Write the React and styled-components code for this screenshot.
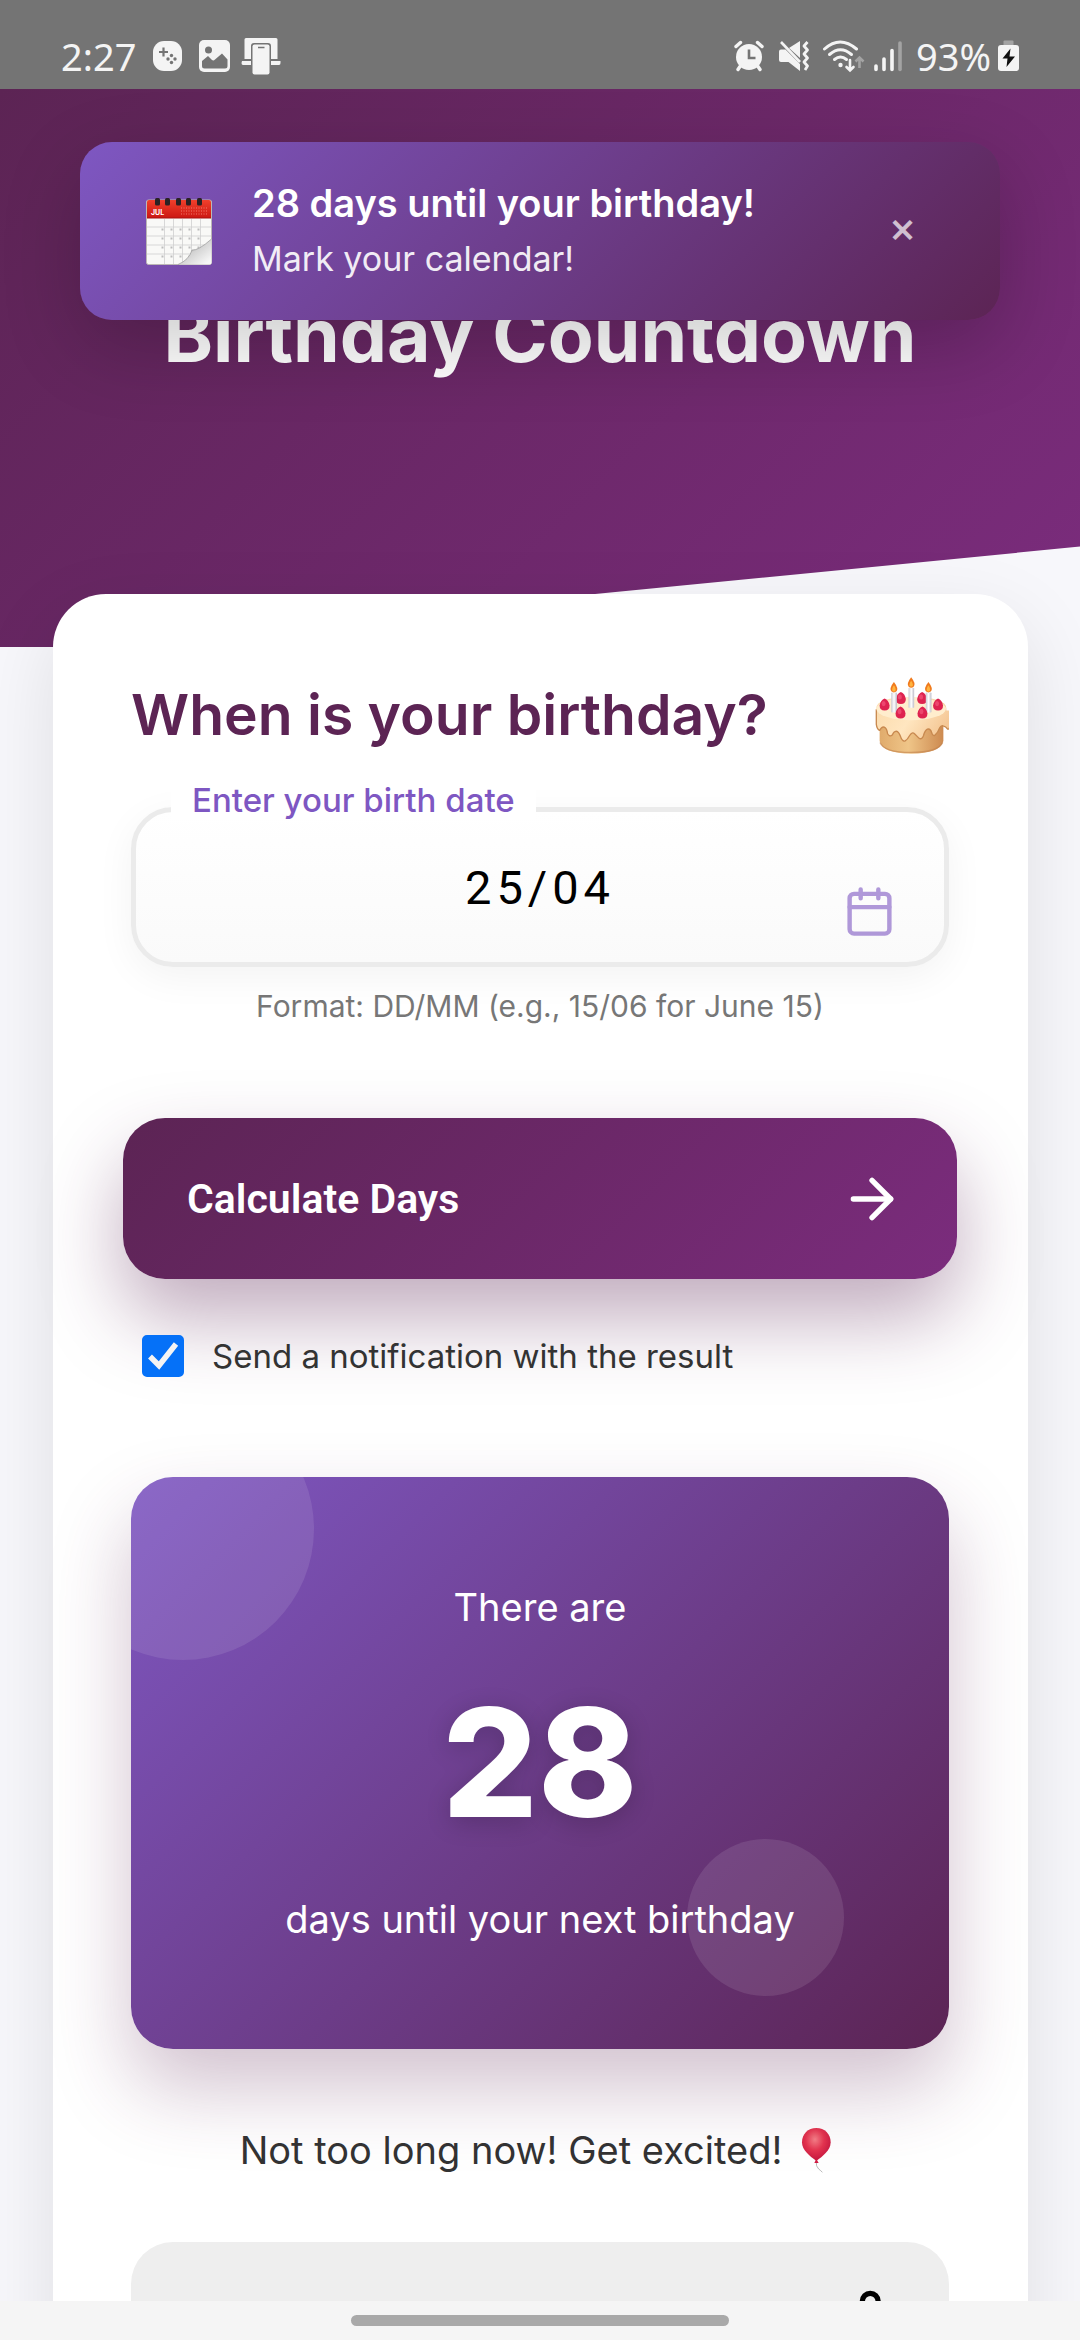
import React, { useState } from "react";
import styled, { createGlobalStyle } from "styled-components";
import { ArrowRight, Share2 } from "lucide-react";

const color = {
  plum: "#5c2454",
  magenta: "#7b2c7d",
  violet: "#7e57c2",
  page: "#f7f7fb",
  text: "#333333",
  muted: "#777777",
};

const GlobalStyle = createGlobalStyle`
  *, *::before, *::after { box-sizing: border-box; }
  body {
    margin: 0;
    background: ${color.page};
    font-family: Inter, "Liberation Sans", sans-serif;
    color: ${color.text};
  }
  h1, h2, p { margin: 0; }
`;

const Screen = styled.div`
  display: flex;
  flex-direction: column;
  height: 100vh;
  overflow: hidden;
`;

const StatusBar = styled.header`
  display: flex;
  flex: none;
  align-items: center;
  justify-content: space-between;
  height: 89px;
  padding: 22px 61px 0;
  background: #747474;
  color: #f4f4f4;
  font-family: "Noto Sans", sans-serif;
  font-size: 38px;
  line-height: 50px;
`;

const StatusGroup = styled.div`
  display: flex;
  align-items: center;
  gap: ${(p) => p.$gap}px;
  svg { display: block; flex: none; }
`;

const Viewport = styled.div`
  position: relative;
  flex: 1;
  min-height: 0;
  overflow: hidden;
  background: ${color.page};
`;

const NavBar = styled.footer`
  display: flex;
  flex: none;
  align-items: center;
  justify-content: center;
  height: 39px;
  background: #f5f5f5;
`;

const NavHandle = styled.div`
  width: 35%;
  height: 11px;
  border-radius: 6px;
  background: #a9a9a9;
`;

const Toast = styled.section`
  position: absolute;
  z-index: 2;
  top: 53px;
  left: 0;
  right: 0;
  display: flex;
  align-items: center;
  gap: 40px;
  width: calc(100% - 160px);
  max-width: 920px;
  margin: 0 auto;
  padding: 33px 66px;
  border-radius: 32px;
  background: linear-gradient(135deg, ${color.violet}, ${color.plum});
  box-shadow: 0 26px 79px rgba(0, 0, 0, 0.2);
  color: #fff;
`;

const ToastBody = styled.div`
  flex: 1;
  line-height: 56px;
`;

const ToastTitle = styled.p`
  font-size: 38px;
  font-weight: 600;
`;

const ToastText = styled.p`
  font-size: 34px;
  opacity: 0.9;
`;

const CloseButton = styled.button`
  width: 63px;
  padding: 0 0 8px;
  border: 0;
  background: none;
  color: #fff;
  font: 500 42px/56px Inter, sans-serif;
  opacity: 0.7;
`;

const Hero = styled.div`
  padding: 196px 53px 262px;
  background: linear-gradient(135deg, ${color.plum}, ${color.magenta});
  clip-path: polygon(0 0, 100% 0, 100% 82%, 5% 100%, 0 100%);
`;

const HeroTitle = styled.h1`
  color: #fff;
  font-size: 75px;
  font-weight: 700;
  line-height: 100px;
  text-align: center;
`;

const Card = styled.main`
  position: relative;
  display: flex;
  flex-direction: column;
  margin: -53px 52px 53px 53px;
  padding: 79px 79px 79px 78px;
  border-radius: 53px;
  background: #fff;
  box-shadow: 0 26px 79px rgba(0, 0, 0, 0.1);
`;

const CardHeader = styled.div`
  display: flex;
  align-items: center;
  justify-content: space-between;
  height: 84px;
  svg { display: block; flex: none; }
`;

const CardTitle = styled.h2`
  color: ${color.plum};
  font-size: 57px;
  font-weight: 600;
  line-height: 84px;
`;

const Field = styled.div`
  position: relative;
  margin-top: 50px;
`;

const FieldLabel = styled.label`
  position: absolute;
  top: -27px;
  left: 40px;
  padding: 0 21px;
  background: #fff;
  color: ${color.violet};
  font-size: 33px;
  font-weight: 500;
  line-height: 40px;
`;

const DateInput = styled.input`
  display: block;
  width: 100%;
  height: 160px;
  padding: 0 58px;
  border: 5px solid #ebebeb;
  border-radius: 42px;
  background: linear-gradient(#fff, #fafafa);
  box-shadow: 0 10px 39px rgba(0, 0, 0, 0.05);
  color: #000;
  font-family: Roboto, sans-serif;
  font-size: 47px;
  letter-spacing: 5px;
  text-align: center;
  outline: 0;
`;

const FieldIcon = styled.span`
  position: absolute;
  top: 78px;
  right: 53px;
  color: ${color.violet};
  opacity: 0.6;
  svg { display: block; }
`;

const Hint = styled.p`
  margin-top: 19px;
  color: ${color.muted};
  font-size: 30px;
  line-height: 40px;
  text-align: center;
`;

const PrimaryButton = styled.button`
  display: flex;
  align-items: center;
  justify-content: space-between;
  height: 161px;
  margin: 92px -8px 0;
  padding: 0 53px 0 64px;
  border: 0;
  border-radius: 42px;
  background: linear-gradient(135deg, ${color.plum}, ${color.magenta});
  box-shadow: 0 39px 79px rgba(92, 36, 84, 0.38);
  color: #fff;
  font-family: Roboto, sans-serif;
  font-size: 41px;
  font-weight: 600;
`;

const CheckRow = styled.label`
  position: relative;
  display: flex;
  align-items: center;
  gap: 28px;
  margin-top: 56px;
  padding-left: 11px;
  font-size: 33px;
  line-height: 42px;
`;

const CheckboxFrame = styled.span`
  display: grid;
  > * { grid-area: 1 / 1; }
  svg { pointer-events: none; }
`;

const Checkbox = styled.input`
  width: 42px;
  height: 42px;
  margin: 0;
  appearance: none;
  border: 3px solid #767676;
  border-radius: 5px;
  background: #fff;
  &:checked {
    border-color: #0571f8;
    background: #0571f8;
  }
`;

const Result = styled.section`
  position: relative;
  display: flex;
  flex-direction: column;
  align-items: center;
  gap: 49px;
  margin-top: 100px;
  padding: 100px 42px;
  overflow: hidden;
  border-radius: 42px;
  background: linear-gradient(135deg, ${color.violet}, ${color.plum});
  box-shadow: 0 39px 79px rgba(92, 36, 84, 0.28);
  color: #fff;
`;

const Bubble = styled.span`
  position: absolute;
  width: ${(p) => p.$size}px;
  height: ${(p) => p.$size}px;
  border-radius: 50%;
  background: rgba(255, 255, 255, 0.1);
`;

const TopBubble = styled(Bubble)`
  top: -79px;
  left: -79px;
`;

const BottomBubble = styled(Bubble)`
  right: 105px;
  bottom: 53px;
`;

const ResultText = styled.p`
  position: relative;
  font-size: 38px;
  line-height: 60px;
`;

const ResultNumber = styled.p`
  position: relative;
  font-size: 150px;
  font-weight: 800;
  line-height: 154px;
  text-shadow: 0 5px 26px rgba(0, 0, 0, 0.2);
`;

const Message = styled.p`
  display: flex;
  align-items: center;
  justify-content: center;
  gap: 11px;
  margin-top: 71px;
  font-size: 38px;
  line-height: 60px;
`;

const ShareButton = styled.button`
  display: flex;
  justify-content: flex-end;
  margin-top: 62px;
  padding: 46px 63px;
  border: 0;
  border-radius: 42px;
  background: #eeeeee;
  color: #000;
`;

function GameIcon() {
  return (
    <svg width="40" height="38" viewBox="0 0 40 38" aria-hidden="true">
      <rect x="6" y="4" width="29" height="30" rx="11" fill="#f4f4f4" />
      <path d="M16.500 10.500v9M12 15h9" stroke="#747474" strokeWidth="2.200" />
      <g fill="#747474">
        <circle cx="24.500" cy="18.500" r="1.700" />
        <circle cx="24.500" cy="25.500" r="1.700" />
        <circle cx="21" cy="22" r="1.700" />
        <circle cx="28" cy="22" r="1.700" />
      </g>
    </svg>
  );
}

function GalleryIcon() {
  return (
    <svg width="40" height="38" viewBox="0 0 40 38" aria-hidden="true">
      <rect x="5" y="3" width="31" height="32" rx="5" fill="#f4f4f4" />
      <circle cx="14.500" cy="13" r="3.500" fill="#747474" />
      <path d="M8 29v-5l6-5 4 4q1.500 1 3-.500l7-6 5.500 6v6.500q0 2.500-2.500 2.500H10.500Q8 31.500 8 29z" fill="#747474" />
    </svg>
  );
}

function DevicesIcon() {
  return (
    <svg width="40" height="38" viewBox="0 0 40 38" aria-hidden="true">
      <path d="M3.500 2.500Q3.500 1 5 1h30q1.500 0 1.500 1.500V22H30V9q0-3-3-3H13q-3 0-3 3v13H3.500z" fill="#f4f4f4" />
      <path d="M1 24h9v4H2q-1.500 0-1.500-2zM30 24h9.500v2q0 2-1.500 2h-8z" fill="#f4f4f4" />
      <rect x="11.500" y="7.500" width="17" height="30" rx="2" fill="#f4f4f4" />
      <path d="M17 10.500h6.500" stroke="#747474" strokeWidth="1.500" />
    </svg>
  );
}

function AlarmIcon() {
  return (
    <svg width="36" height="34" viewBox="0 0 36 34" aria-hidden="true">
      <g stroke="#f4f4f4" strokeWidth="3.400" strokeLinecap="round">
        <path d="M5 7.500 9.500 3.500M31 7.500l-4.500-4M9 27.500 7 30.500M27 27.500l2 3" />
      </g>
      <circle cx="18" cy="18" r="13" fill="#f4f4f4" />
      <path d="M18 10.500V19h6.500" fill="none" stroke="#747474" strokeWidth="2.600" />
    </svg>
  );
}

function MuteIcon() {
  return (
    <svg width="36" height="34" viewBox="0 0 36 34" aria-hidden="true">
      <g fill="#f4f4f4">
        <path d="M13 9 24 2v17z" />
        <path d="M3 12.500q0-2 2-2h4.500L24 25v7L12.500 23H5q-2 0-2-2z" />
      </g>
      <path d="m5 3 19 20" stroke="#f4f4f4" strokeWidth="2.600" />
      <path d="m31.500 3-3.500 4 3.500 4-3.500 4 3.500 4-3.500 4 3.500 4-2.500 4" fill="none" stroke="#f4f4f4" strokeWidth="2.800" strokeLinejoin="round" />
    </svg>
  );
}

function WifiIcon() {
  return (
    <svg width="44" height="34" viewBox="0 0 44 34" aria-hidden="true">
      <g fill="none" stroke="#f4f4f4" strokeWidth="3" strokeLinecap="round">
        <path d="M3.500 10q15.500-14 32 0" />
        <path d="M8.500 15.500q11-9.500 22 0" />
        <path d="M13.500 20.500q6-5 12 0" />
        <path d="M29 21v10M25.500 28l3.500 3.500 3.500-3.500" strokeWidth="2.600" />
      </g>
      <circle cx="19.500" cy="26" r="2.200" fill="#f4f4f4" />
      <path d="M38.500 29V19M34.500 22.500l4-4 4 4" fill="none" stroke="#a3a3a3" strokeWidth="2.600" />
    </svg>
  );
}

function SignalIcon() {
  return (
    <svg width="28" height="34" viewBox="0 0 28 34" aria-hidden="true">
      <g strokeWidth="3.600" strokeLinecap="round" stroke="#f4f4f4">
        <path d="M2 27v3.500M10 20v10.500M18 11.500v19" />
        <path d="M26 4v26.500" stroke="#a3a3a3" />
      </g>
    </svg>
  );
}

function BatteryIcon() {
  return (
    <svg width="21" height="34" viewBox="0 0 21 34" aria-hidden="true">
      <rect x="5.500" y="1.500" width="10" height="8" rx="1" fill="#a3a3a3" />
      <rect y="6" width="21" height="26" rx="3" fill="#f4f4f4" />
      <path d="M12.500 9.500 4.500 19.500h5l-1 8.500 8.500-10.500h-5.500z" fill="#111" />
    </svg>
  );
}

function CalendarPad() {
  const cols = [18.5, 27.5, 36.5, 45.5, 54.5];
  const rows = [29, 38, 47, 56];
  return (
    <svg width="66" height="67" viewBox="0 0 66 67" role="img" aria-label="Calendar">
      <defs>
        <linearGradient id="padRed" x1="0" y1="0" x2="0" y2="1">
          <stop offset="0" stopColor="#f0402c" />
          <stop offset="1" stopColor="#cc1712" />
        </linearGradient>
        <linearGradient id="padCurl" x1="0.300" y1="0.300" x2="0.900" y2="0.900">
          <stop offset="0" stopColor="#858585" />
          <stop offset="0.300" stopColor="#d2d2d2" />
          <stop offset="1" stopColor="#f7f7f7" />
        </linearGradient>
      </defs>
      <rect x="0.500" y="2" width="65" height="64.500" rx="2" fill="#f9f9f7" stroke="#bcb7b5" />
      <path d="M1 4q0-2 2-2h60q2 0 2 2v16H1z" fill="url(#padRed)" />
      <path d="M1 20h64" stroke="#a81210" />
      <text x="5" y="16.500" fill="#fff" fontFamily="Inter, sans-serif" fontSize="7" fontWeight="700">JUL</text>
      <path d="M35 10h26M35 13h26M35 16h26" stroke="#f27b6d" strokeDasharray="1 1.500" />
      <g stroke="#cfcfcf" strokeWidth="0.800">
        {cols.map((x) => <path key={x} d={`M${x} 21v45`} />)}
        {rows.map((y) => <path key={y} d={`M1 ${y}h64`} />)}
      </g>
      <g fill="#bdbdbd">
        {rows.map((y) => cols.map((x) => <rect key={`${x}-${y}`} x={x - 3} y={y + 1.5} width="2" height="2" />))}
      </g>
      <path d="M32 66.500Q43 62 46 52q6 1 19.500-11v23.500q0 2-2 2z" fill="url(#padCurl)" />
      <path d="M32 66.500Q43 62 46 52q6 1 19.500-11" fill="none" stroke="#9a9a9a" strokeWidth="0.700" />
      <g fill="#2b2224">
        {[9, 19, 30, 40, 51].map((x) => <rect key={x} x={x} y="0" width="5" height="7.500" rx="1.500" />)}
      </g>
    </svg>
  );
}

function Candle({ x, y, height }) {
  return (
    <g>
      <rect x={x - 8} y={y} width="17" height={height} rx="2" fill="url(#candle)" />
      <path d={`M${x} ${y - 32}q16 20 7 29-7 5-14 0-9-9 7-29z`} fill="#f07a1d" />
      <path d={`M${x} ${y - 22}q8 12 4 17-4 3-8 0-4-5 4-17z`} fill="#ffb43f" />
    </g>
  );
}

function Berry({ x, y }) {
  return (
    <g>
      <path d={`M${x} ${y - 18}q12 4 15 21 0 15-15 15t-15-15q3-17 15-21z`} fill="#de2350" />
      <ellipse cx={x - 3} cy={y - 3} rx="6" ry="8" fill="#f4557a" opacity="0.700" />
    </g>
  );
}

function CakeIcon() {
  return (
    <svg width="75" height="79" viewBox="38 32 224 238" role="img" aria-label="Birthday cake">
      <defs>
        <linearGradient id="candle">
          <stop offset="0" stopColor="#c9c9d2" />
          <stop offset="0.500" stopColor="#ffffff" />
          <stop offset="1" stopColor="#bcbcc8" />
        </linearGradient>
        <linearGradient id="sponge">
          <stop offset="0" stopColor="#e0ab6c" />
          <stop offset="0.450" stopColor="#efc588" />
          <stop offset="1" stopColor="#cd8a50" />
        </linearGradient>
        <linearGradient id="icing" x1="0" y1="0" x2="1" y2="0.300">
          <stop offset="0" stopColor="#fbdcae" />
          <stop offset="0.500" stopColor="#ffe6c0" />
          <stop offset="1" stopColor="#f5c896" />
        </linearGradient>
      </defs>
      <path d="M54 170v58q8 38 95 38t97-38v-58z" fill="url(#sponge)" />
      <path d="M55 232q12 30 94 30t95-30" fill="none" stroke="#c1814b" strokeWidth="4" opacity="0.600" />
      <path d="M44 130v48q2 15 10 18 6-12 14-10 8 4 10 20 6 10 14 4 4-11 12-12 8 2 12 14 6 18 14 16 8-4 14-16 8-13 15-6 8 8 14 14 9 4 13-8 4-16 12-20 10-2 13 12 4 10 10 6 9-8 10-26l24-10v-44q0-34-106-34T44 130z" fill="url(#icing)" />
      <path d="M44 132v46q2 15 10 18 6-12 14-10 8 4 10 20 6 10 14 4 4-11 12-12 8 2 12 14 6 18 14 16 8-4 14-16 8-13 15-6 8 8 14 14 9 4 13-8 4-16 12-20 10-2 13 12 4 10 10 6 9-8 14-22 4-8 10-6 9 2 14 10 6 2 7-14v-42" fill="url(#icing)" stroke="#c8894f" strokeWidth="4" strokeLinejoin="round" />
      <ellipse cx="149" cy="131" rx="105" ry="34" fill="#ffedcd" />
      <Berry x={118} y={98} />
      <Berry x={182} y={98} />
      <Berry x={69} y={118} />
      <Berry x={230} y={118} />
      <Candle x={149} y={68} height={60} />
      <Candle x={97} y={82} height={60} />
      <Candle x={201} y={82} height={60} />
      <Berry x={117} y={142} />
      <Berry x={183} y={142} />
    </svg>
  );
}

function BalloonIcon() {
  return (
    <svg width="47" height="47" viewBox="35 26 141 141" role="img" aria-label="Balloon">
      <defs>
        <radialGradient id="balloon" cx="0.450" cy="0.350" r="0.650">
          <stop offset="0" stopColor="#f58088" />
          <stop offset="0.500" stopColor="#e5344f" />
          <stop offset="1" stopColor="#c4163f" />
        </radialGradient>
      </defs>
      <path d="M105 130q-2 14 7 22 7 5 11 10" fill="none" stroke="#b9b9b9" strokeWidth="3" />
      <path d="M105 29c25 0 43 18 43 43 0 24-24 42-43 56-19-14-43-32-43-56 0-25 18-43 43-43z" fill="url(#balloon)" />
      <path d="M105 122l-6 12h13z" fill="#d11c43" />
    </svg>
  );
}

function CalendarOutline() {
  return (
    <svg width="53" height="53" viewBox="0 0 24 24" fill="none" stroke="currentColor" strokeWidth="2" strokeLinecap="round" strokeLinejoin="round" aria-hidden="true">
      <rect x="3" y="4" width="18" height="18" rx="2" />
      <path d="M16 2v4M8 2v4M3 10h18" />
    </svg>
  );
}

export default function App() {
  const [date, setDate] = useState("25/04");
  const [notify, setNotify] = useState(true);
  const [toastOpen, setToastOpen] = useState(true);

  return (
    <>
      <GlobalStyle />
      <Screen>
        <StatusBar>
          <StatusGroup $gap={11}>
            <span>2:27</span>
            <StatusGroup $gap={7}>
              <GameIcon />
              <GalleryIcon />
              <DevicesIcon />
            </StatusGroup>
          </StatusGroup>
          <StatusGroup $gap={14}>
            <StatusGroup $gap={9}>
              <AlarmIcon />
              <MuteIcon />
              <WifiIcon />
              <SignalIcon />
            </StatusGroup>
            <StatusGroup $gap={7}>
              <span>93%</span>
              <BatteryIcon />
            </StatusGroup>
          </StatusGroup>
        </StatusBar>

        <Viewport>
          {toastOpen && (
            <Toast role="status">
              <CalendarPad />
              <ToastBody>
                <ToastTitle>28 days until your birthday!</ToastTitle>
                <ToastText>Mark your calendar!</ToastText>
              </ToastBody>
              <CloseButton type="button" aria-label="Close" onClick={() => setToastOpen(false)}>×</CloseButton>
            </Toast>
          )}

          <Hero>
            <HeroTitle>Birthday Countdown</HeroTitle>
          </Hero>

          <Card>
            <CardHeader>
              <CardTitle>When is your birthday?</CardTitle>
              <CakeIcon />
            </CardHeader>

            <Field>
              <DateInput id="birth-date" value={date} onChange={(e) => setDate(e.target.value)} />
              <FieldLabel htmlFor="birth-date">Enter your birth date</FieldLabel>
              <FieldIcon>
                <CalendarOutline />
              </FieldIcon>
            </Field>
            <Hint>Format: DD/MM (e.g., 15/06 for June 15)</Hint>

            <PrimaryButton type="button">
              Calculate Days
              <ArrowRight size={64} strokeWidth={2} />
            </PrimaryButton>

            <CheckRow>
              <CheckboxFrame>
                <Checkbox type="checkbox" checked={notify} onChange={(e) => setNotify(e.target.checked)} />
                {notify && (
                  <svg width="42" height="42" viewBox="0 0 42 42" aria-hidden="true">
                    <path d="m8 21.500 9 9L34 9" fill="none" stroke="#f4f4f4" strokeWidth="5.500" />
                  </svg>
                )}
              </CheckboxFrame>
              Send a notification with the result
            </CheckRow>

            <Result aria-live="polite">
              <TopBubble $size={262} />
              <BottomBubble $size={157} />
              <ResultText>There are</ResultText>
              <ResultNumber>28</ResultNumber>
              <ResultText>days until your next birthday</ResultText>
            </Result>

            <Message>
              Not too long now! Get excited!
              <BalloonIcon />
            </Message>

            <ShareButton type="button" aria-label="Share">
              <Share2 size={63} strokeWidth={2} />
            </ShareButton>
          </Card>
        </Viewport>

        <NavBar>
          <NavHandle />
        </NavBar>
      </Screen>
    </>
  );
}
